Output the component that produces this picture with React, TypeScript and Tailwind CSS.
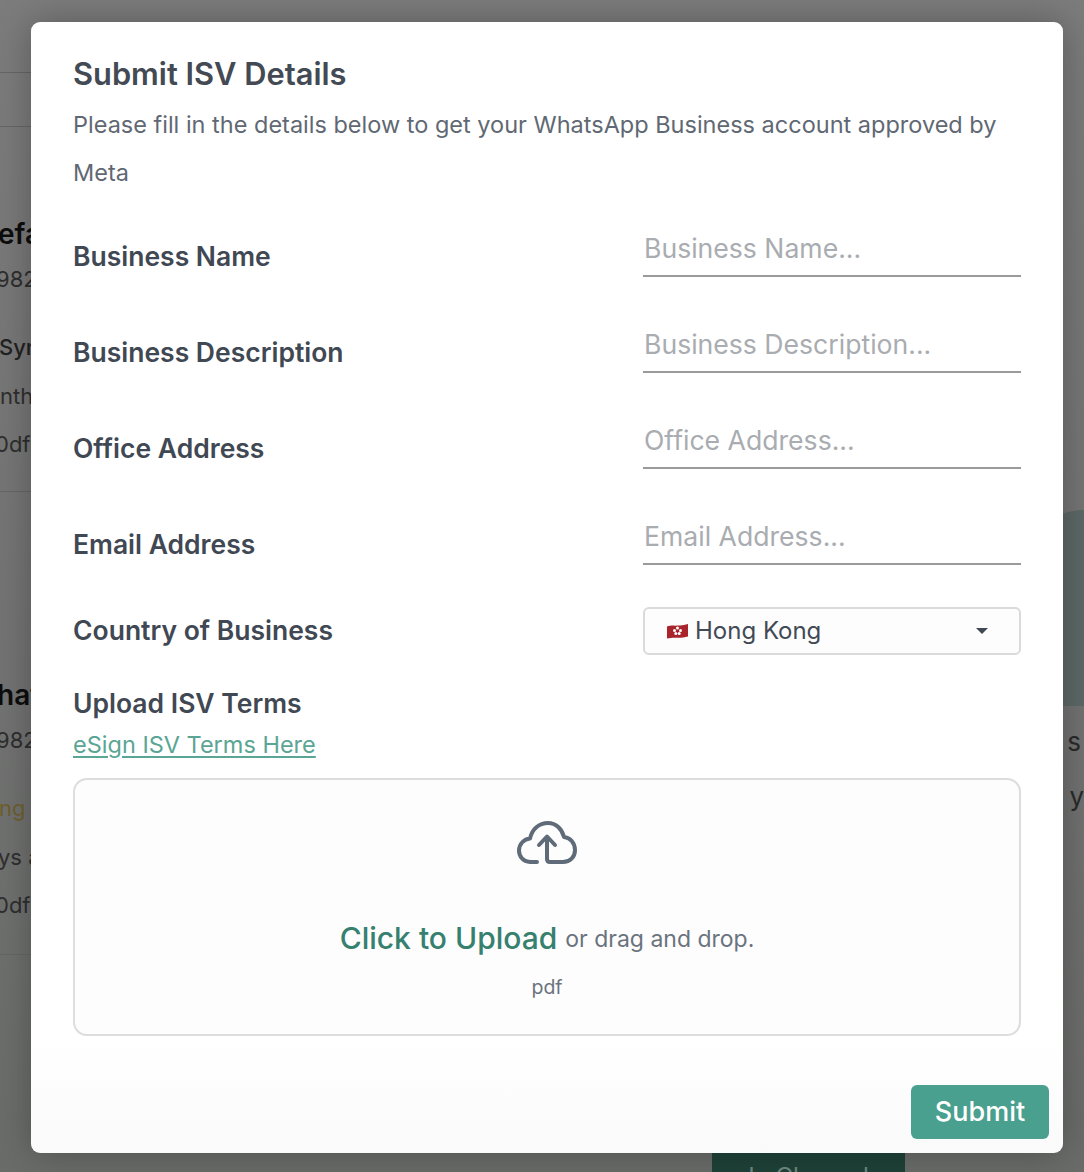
const fields = [
  { label: "Business Name", placeholder: "Business Name..." },
  { label: "Business Description", placeholder: "Business Description..." },
  { label: "Office Address", placeholder: "Office Address..." },
  { label: "Email Address", placeholder: "Email Address..." },
];

const backdropRows = [
  { text: "efa", className: "-ml-[2px] h-[45px] text-[28px] font-semibold text-[#0d0d0d]" },
  { text: "982", className: "-ml-[4px] h-[68px] text-[22px] text-[#2e2e2e]" },
  { text: "Syn", className: "-ml-[1px] h-[49px] text-[22px] font-medium text-[#222]" },
  { text: "nth", className: "ml-0 h-[48px] text-[22px] text-[#2e2e2e]" },
  { text: "0dfa", className: "-ml-[5px] h-[63px] text-[22px] text-[#2e2e2e]" },
];

const backdropRowsLower = [
  { text: "hat", className: "-ml-[3px] h-[45px] text-[28px] font-semibold text-[#0d0d0d]" },
  { text: "982", className: "-ml-[4px] h-[68px] text-[22px] text-[#2e2e2e]" },
  { text: "ng a", className: "-ml-[1px] h-[49px] text-[22px] text-[#6e5f2e]" },
  { text: "ys a", className: "-ml-[2px] h-[48px] text-[22px] text-[#2e2e2e]" },
  { text: "0dfa", className: "-ml-[5px] h-[65px] text-[22px] text-[#2e2e2e]" },
];

function Backdrop() {
  return (
    <div className="w-[70px] overflow-hidden whitespace-nowrap font-['Inter',sans-serif]">
      <div className="h-[72px]" />
      <div className="h-[54px] border-t border-[#666]" />
      <div className="h-[92px] border-t border-[#666]" />
      {backdropRows.map((row, i) => (
        <div key={i} className={`leading-[32px] ${row.className}`}>
          {row.text}
        </div>
      ))}
      <div className="h-[188px] border-t border-[#666]" />
      {backdropRowsLower.map((row, i) => (
        <div key={i} className={`leading-[32px] ${row.className}`}>
          {row.text}
        </div>
      ))}
      <div className="border-t border-[#666]" />
    </div>
  );
}

function HongKongFlag() {
  return (
    <svg width="23" height="17" viewBox="0 0 23 17" className="shrink-0">
      <path d="M1 3.5 C6 1.5 10 4 22 1 V13.5 C14 16 8 13.5 1 15.5 Z" fill="#a9252c" />
      <g fill="#fff">
        <circle cx="11.5" cy="5" r="1.5" />
        <circle cx="8.5" cy="7.4" r="1.5" />
        <circle cx="14.5" cy="7.4" r="1.5" />
        <circle cx="9.8" cy="10.6" r="1.5" />
        <circle cx="13.2" cy="10.6" r="1.5" />
      </g>
    </svg>
  );
}

function CloudUpload() {
  return (
    <svg width="60" height="43" viewBox="0 0 60 43" fill="none" stroke="#5f6b78" strokeWidth="4" strokeLinecap="round" strokeLinejoin="round">
      <path d="M20 41 H13 C6 41 2 35 2 29.5 C2 23 7 18 13 17.5 C15 8 22 2 31 2 C39 2 45 8 47 16 C53 16.5 58 22 58 29 C58 36 53 41 46 41 H33 Q30 41 30 38 V17" />
      <path d="M22 24 L30 15.5 L38 24" />
    </svg>
  );
}

export default function App() {
  return (
    <div className="relative h-[1172px] w-full overflow-hidden bg-gradient-to-b from-[#7c7c7c] to-[#6a6c6a] font-['Inter',sans-serif]">
      <Backdrop />

      {/* decoration and button peeking out from behind the modal */}
      <div className="absolute right-0 top-[510px] h-[196px] w-[60px] rounded-bl-[24px] rounded-tl-[60px] bg-[#5c6867]" />
      <div className="absolute right-[3px] top-[726px] text-[26px] leading-[32px] text-[#2a2a2a]">s</div>
      <div className="absolute right-0 top-[781px] text-[26px] leading-[32px] text-[#2a2a2a]">y</div>
      <div className="absolute left-[712px] top-[1140px] flex h-[40px] w-[193px] justify-center bg-[#1f4238] pt-[21px] text-[24px] leading-[32px] text-[#6f8a80]">
        In Channel
      </div>

      {/* modal */}
      <div className="absolute left-[31px] top-[22px] flex h-[1131px] w-[1032px] flex-col rounded-[9px] bg-gradient-to-b from-white from-90% to-[#fafafa] pb-[14px] pl-[42px] pr-[14px] pt-[30px] shadow-[0_0_36px_rgba(0,0,0,0.28)]">
        <h2 className="text-[30.8px] font-semibold leading-[44px] text-[#434a54]">Submit ISV Details</h2>
        <p className="mt-[5px] w-[948px] text-[23.5px] leading-[48px] text-[#5f6873]">
          Please fill in the details below to get your WhatsApp Business account approved by Meta
        </p>

        <div className="mt-[25px] flex w-[948px] flex-col">
          {fields.map((field) => (
            <div key={field.label} className="flex h-[96px] items-start justify-between">
              <span className="mt-[12px] text-[26.5px] font-semibold leading-[44px] text-[#3f4853]">{field.label}</span>
              <div className="h-[55px] w-[378px] border-b-2 border-[#9a9a9a] px-px pt-[6px] text-[26.6px] leading-[40px] text-[#a9acb0]">
                {field.placeholder}
              </div>
            </div>
          ))}

          <div className="mt-[1px] flex h-[48px] items-center justify-between">
            <span className="text-[26.5px] font-semibold text-[#3f4853]">Country of Business</span>
            <div className="flex h-[48px] w-[378px] items-center rounded-[6px] border-2 border-[#d8dadc] bg-[#fdfdfd] pl-[21px] pr-[31px]">
              <HongKongFlag />
              <span className="ml-[6px] text-[24px] text-[#424a55]">Hong Kong</span>
              <span className="ml-auto h-0 w-0 border-x-[6px] border-t-[6px] border-x-transparent border-t-[#3f4853]" />
            </div>
          </div>

          <span className="mt-[26px] text-[26.5px] font-semibold leading-[44px] text-[#3f4853]">Upload ISV Terms</span>
          <a href="#" className="text-[23.5px] leading-[40px] text-[#5aa594] underline underline-offset-3">
            eSign ISV Terms Here
          </a>

          <div className="mt-[13px] flex h-[258px] flex-col items-center rounded-[14px] border-2 border-[#dcdddf] bg-[#fdfdfd] pt-[41px]">
            <CloudUpload />
            <div className="mt-[50px] flex items-baseline gap-[8px]">
              <span className="text-[30px] font-medium leading-[48px] text-[#36806f]">Click to Upload</span>
              <span className="-translate-y-[2px] text-[23px] text-[#6a737e]">or drag and drop.</span>
            </div>
            <span className="mt-[9px] text-[19.5px] leading-[32px] text-[#6a737e]">pdf</span>
          </div>
        </div>

        <button className="ml-auto mt-auto h-[54px] w-[138px] rounded-[6px] bg-[#4aa08f] text-[27px] font-medium text-white">
          Submit
        </button>
      </div>
    </div>
  );
}
